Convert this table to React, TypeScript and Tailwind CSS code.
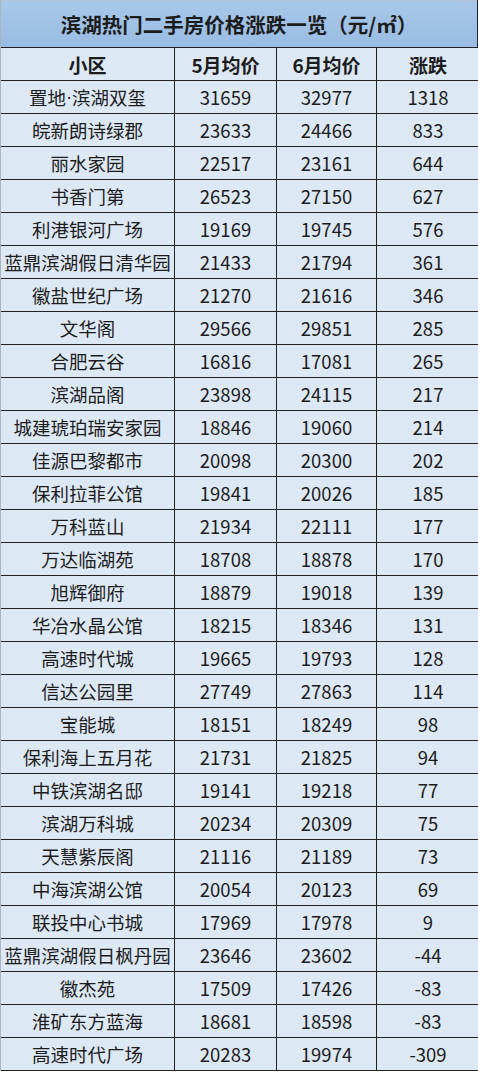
const rows: [string, string, string, string][] = [
  ['置地·滨湖双玺', '31659', '32977', '1318'],
  ['皖新朗诗绿郡', '23633', '24466', '833'],
  ['丽水家园', '22517', '23161', '644'],
  ['书香门第', '26523', '27150', '627'],
  ['利港银河广场', '19169', '19745', '576'],
  ['蓝鼎滨湖假日清华园', '21433', '21794', '361'],
  ['徽盐世纪广场', '21270', '21616', '346'],
  ['文华阁', '29566', '29851', '285'],
  ['合肥云谷', '16816', '17081', '265'],
  ['滨湖品阁', '23898', '24115', '217'],
  ['城建琥珀瑞安家园', '18846', '19060', '214'],
  ['佳源巴黎都市', '20098', '20300', '202'],
  ['保利拉菲公馆', '19841', '20026', '185'],
  ['万科蓝山', '21934', '22111', '177'],
  ['万达临湖苑', '18708', '18878', '170'],
  ['旭辉御府', '18879', '19018', '139'],
  ['华冶水晶公馆', '18215', '18346', '131'],
  ['高速时代城', '19665', '19793', '128'],
  ['信达公园里', '27749', '27863', '114'],
  ['宝能城', '18151', '18249', '98'],
  ['保利海上五月花', '21731', '21825', '94'],
  ['中铁滨湖名邸', '19141', '19218', '77'],
  ['滨湖万科城', '20234', '20309', '75'],
  ['天慧紫辰阁', '21116', '21189', '73'],
  ['中海滨湖公馆', '20054', '20123', '69'],
  ['联投中心书城', '17969', '17978', '9'],
  ['蓝鼎滨湖假日枫丹园', '23646', '23602', '-44'],
  ['徽杰苑', '17509', '17426', '-83'],
  ['淮矿东方蓝海', '18681', '18598', '-83'],
  ['高速时代广场', '20283', '19974', '-309'],
];

const font = { fontFamily: '"Noto Sans CJK SC", "Noto Sans", sans-serif' };

// the name column uses a narrow latin middle dot
function Name({ text }: { text: string }) {
  const parts = text.split('·');
  if (parts.length === 1) return <>{text}</>;
  return (
    <>
      {parts[0]}
      <span className="font-['Liberation_Sans']">·</span>
      {parts[1]}
    </>
  );
}

function Row({ cells, bold }: { cells: string[]; bold?: boolean }) {
  return (
    <div className="grid grid-cols-[174px_102px_100px_102px] h-[33px] border-b border-[#222]">
      {cells.map((c, i) => (
        <div
          key={i}
          className={
            'flex items-center justify-center bg-[#dde8f5] text-[#1c1c1c] leading-none ' +
            (i < 3 ? 'border-r border-[#222] ' : '') +
            (bold ? 'font-bold text-[19px]' : 'text-[18.5px]')
          }
        >
          {i === 0 ? <Name text={c} /> : c}
        </div>
      ))}
    </div>
  );
}

export default function App() {
  return (
    <div className="w-[478px] bg-white" style={font}>
      <div className="border-l border-l-[#a9b4c0] border-r border-r-[#222]">
        {/* Title */}
        <div className="h-[48px] border-t border-[#b4c4d6] border-b border-b-[#222] bg-gradient-to-b from-[#a8c8ea] to-[#99bce3] flex items-center justify-center">
          <span className="text-[20.5px] font-bold text-[#1c1c1c] leading-none">
            滨湖热门二手房价格涨跌一览（元/㎡）
          </span>
        </div>
        <Row cells={['小区', '5月均价', '6月均价', '涨跌']} bold />
        {rows.map((r) => (
          <Row key={r[0]} cells={r} />
        ))}
      </div>
    </div>
  );
}
